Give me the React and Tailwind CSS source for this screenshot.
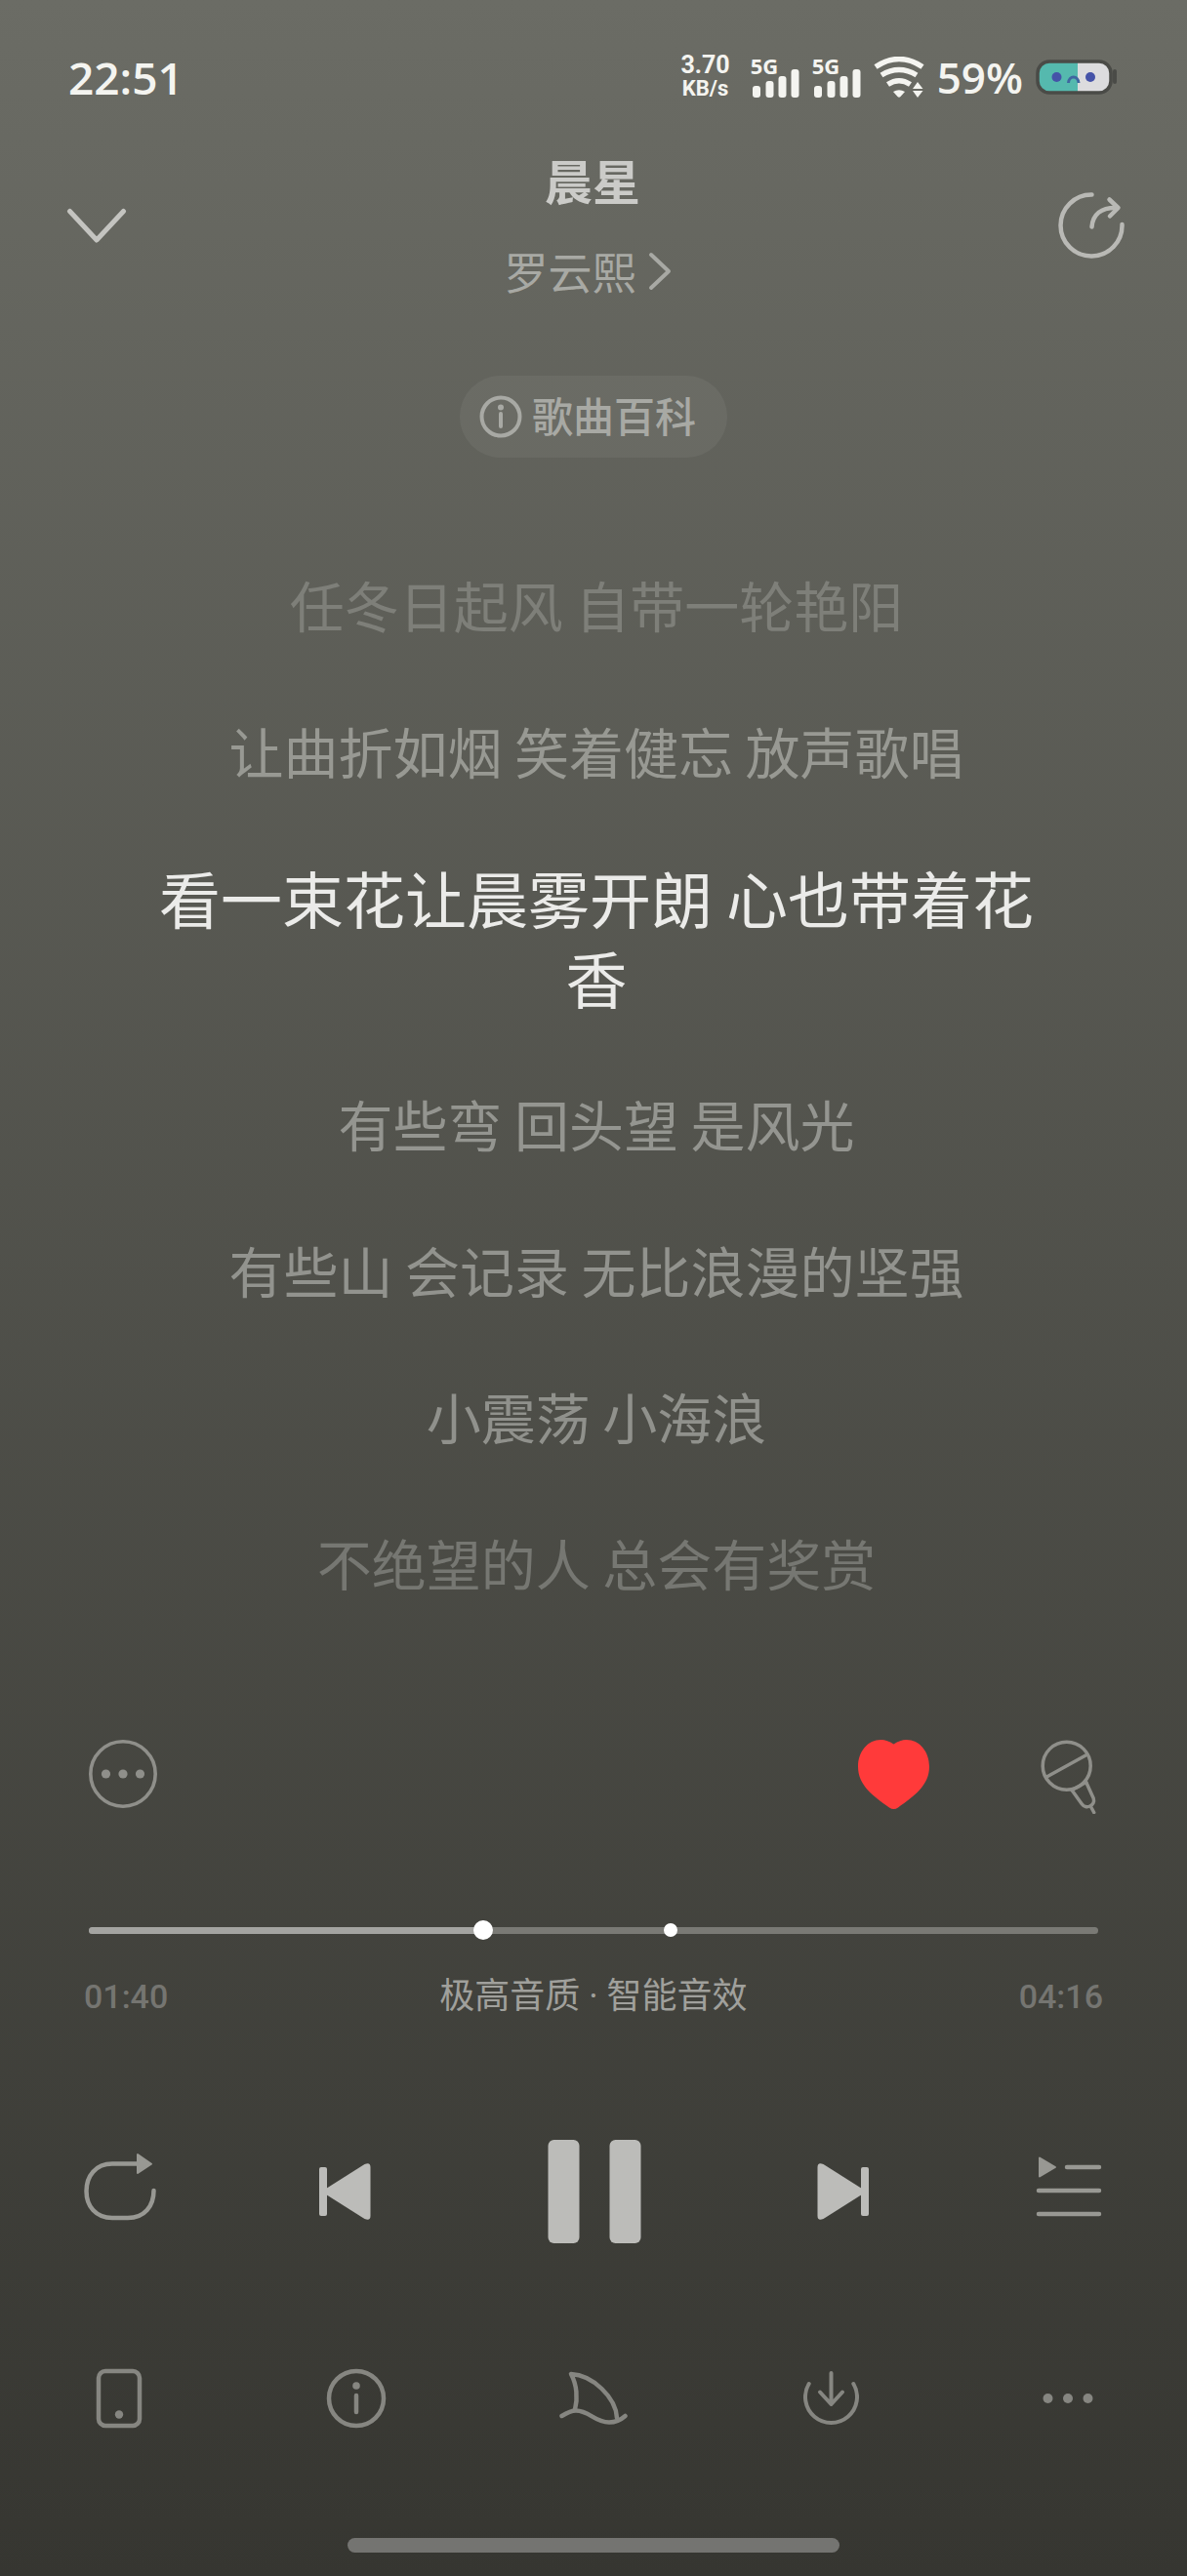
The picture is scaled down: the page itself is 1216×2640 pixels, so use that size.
import React, { useState } from "react";

const lyrics = [
  { text: "任冬日起风 自带一轮艳阳", color: "text-[#7e7f79]" },
  { text: "让曲折如烟 笑着健忘 放声歌唱", color: "text-[#989993]" },
  { text: "看一束花让晨雾开朗 心也带着花香", active: true, color: "text-[#ebebe9]" },
  { text: "有些弯 回头望 是风光", color: "text-[#949590]" },
  { text: "有些山 会记录 无比浪漫的坚强", color: "text-[#92938e]" },
  { text: "小震荡 小海浪", color: "text-[#90918c]" },
  { text: "不绝望的人 总会有奖赏", color: "text-[#767772]" },
];

const formatTime = (s) =>
  `${String(Math.floor(s / 60)).padStart(2, "0")}:${String(s % 60).padStart(2, "0")}`;

function Signal() {
  return (
    <div className="relative h-[42px] w-[50px]">
      <span className="absolute left-0 top-0 text-[22px] font-bold leading-[18px]">5G</span>
      <svg className="h-full w-full" viewBox="0 0 50 42" fill="currentColor">
        <rect x="2" y="30" width="8" height="12" rx="3" />
        <rect x="15.500" y="25" width="8" height="17" rx="3" />
        <rect x="28.500" y="20" width="8" height="22" rx="3" />
        <rect x="41.500" y="13" width="8" height="29" rx="3" />
      </svg>
    </div>
  );
}

function StatusBar() {
  return (
    <div className="flex h-[50px] items-center pl-[70px] pr-[71px] font-['Open_Sans',sans-serif] text-[#f4f4f0]">
      <span className="text-[46px] font-semibold leading-[50px]">22:51</span>
      <div className="ml-auto flex items-center gap-[13px]">
        <div className="mr-2 flex flex-col items-center font-[Roboto,sans-serif] font-bold">
          <span className="text-[25px] leading-6">3.70</span>
          <span className="text-[22px] leading-6">KB/s</span>
        </div>
        <Signal />
        <Signal />
        <svg className="h-[42px] w-[52px]" viewBox="0 0 52 42" fill="none" stroke="currentColor" strokeWidth="5.500">
          <path d="M2 10.500Q26 -5.500 50 10.500" />
          <path d="M8 19Q26 8 44 19" />
          <path d="M14.500 28.500Q26 21 37.500 28.500" />
          <path d="M20 36Q26 32.500 32 36L27.500 41Q26 42.500 24.500 41Z" fill="currentColor" stroke="none" />
          <path d="M40 33L45 26L50.500 33ZM40 35H50.500L45 42Z" fill="currentColor" stroke="none" />
        </svg>
        <span className="text-[44px] font-semibold leading-[50px]">59%</span>
        <svg className="h-9 w-[84px]" viewBox="0 0 84 36">
          <rect x="2" y="2" width="75" height="32" rx="12" fill="#dcdcde" />
          <path d="M43 2H14A12 12 0 0 0 2 14V22A12 12 0 0 0 14 34H43Z" fill="#55b9ae" />
          <rect x="2" y="2" width="75" height="32" rx="12" fill="none" stroke="#4a4b47" strokeWidth="3.500" />
          <circle cx="21.500" cy="18" r="5" fill="#4553a8" />
          <circle cx="56" cy="18" r="5" fill="#4553a8" />
          <path d="M33.500 24C34 16 43.500 16 44 24" fill="none" stroke="#3f66a0" strokeWidth="3" />
          <rect x="79" y="10" width="4" height="15" rx="2" fill="#4a4b47" />
        </svg>
      </div>
    </div>
  );
}

function Header() {
  return (
    <header className="mt-[50px] flex items-center justify-between pl-[68px] pr-16">
      <button aria-label="收起" className="text-[#c4c4c0]">
        <svg className="h-9 w-[62px]" viewBox="0 0 62 36" fill="none" stroke="currentColor" strokeWidth="5" strokeLinecap="round" strokeLinejoin="round">
          <path d="M3.500 3.500L31 33L58.500 3.500" />
        </svg>
      </button>
      <div className="flex flex-col items-center gap-[34px]">
        <h1 className="text-[49px] font-bold leading-[60px] text-[#cbcbc8]">晨星</h1>
        <a href="#artist" className="flex items-center gap-3 pr-2.5 text-[45px] leading-[60px] text-[#a8a9a4]">
          罗云熙
          <svg className="h-10 w-6" viewBox="0 0 24 40" fill="none" stroke="currentColor" strokeWidth="4" strokeLinecap="round" strokeLinejoin="round">
            <path d="M3 3L21 20L3 37" />
          </svg>
        </a>
      </div>
      <button aria-label="分享" className="text-[#b9b9b5]">
        <svg className="h-[68px] w-[68px]" viewBox="0 0 68 68" fill="none" stroke="currentColor" strokeWidth="4.500" strokeLinecap="round" strokeLinejoin="round">
          <path d="M34.500 2.500A31.500 31.500 0 1 0 65.500 33" />
          <path d="M34.500 35.500C35.500 23 44 15.500 60 16" />
          <path d="M52.500 7.500L61.500 16L53 24.500" />
        </svg>
      </button>
    </header>
  );
}

function ProgressBar({ value, max, onChange }) {
  return (
    <div className="relative mx-[91px] mt-[109px] flex h-5 items-center">
      <div className="h-[7px] w-full overflow-hidden rounded-full bg-[#7a7a75]">
        <div className="h-full bg-[#a4a4a1]" style={{ width: `${(value / max) * 100}%` }}></div>
      </div>
      {/* chorus marker */}
      <div className="absolute left-[57%] h-3.5 w-3.5 rounded-full bg-white"></div>
      <div
        className="absolute h-5 w-5 -translate-x-1/2 rounded-full bg-white"
        style={{ left: `${(value / max) * 100}%` }}
      ></div>
      <input
        type="range"
        aria-label="播放进度"
        min="0"
        max={max}
        value={value}
        onChange={(e) => onChange(Number(e.target.value))}
        className="absolute inset-0 h-full w-full cursor-pointer opacity-0"
      />
    </div>
  );
}

export default function App() {
  const [time, setTime] = useState(100);
  const [playing, setPlaying] = useState(true);
  const [liked, setLiked] = useState(true);
  const duration = 256;

  return (
    <div className="flex min-h-screen flex-col bg-linear-to-b from-[#6b6c65] to-[#363631] pb-6 pt-[54px] font-['Noto_Sans_CJK_SC',sans-serif]">
      <StatusBar />
      <Header />

      <a
        href="#wiki"
        className="mt-[77px] flex h-[84px] items-center gap-2.5 self-center rounded-full bg-white/5 pl-5 pr-8 text-[42px] font-medium leading-[60px] text-[#a8a9a4]"
      >
        <svg className="h-11 w-11" viewBox="0 0 44 44" fill="none" stroke="currentColor" strokeWidth="4">
          <circle cx="22" cy="22" r="19.500" />
          <path d="M22 19V32" strokeLinecap="round" />
          <circle cx="22" cy="12.500" r="3" fill="currentColor" stroke="none" />
        </svg>
        <span className="pb-1">歌曲百科</span>
      </a>

      {/* Lyrics */}
      <div className="mt-[109px] flex flex-col gap-[68px] pl-[147px] pr-[141px] text-center">
        {lyrics.map((line) => (
          <p
            key={line.text}
            className={`leading-[82px] ${line.active ? "text-[63px]" : "text-[56px]"} ${line.color}`}
          >
            {line.text}
          </p>
        ))}
      </div>

      {/* Song actions */}
      <div className="mt-[141px] flex items-start pl-[91px] pr-[92px] text-[#8f8f8a]">
        <button aria-label="更多操作">
          <svg className="h-[70px] w-[70px]" viewBox="0 0 70 70" fill="currentColor">
            <circle cx="35" cy="35" r="33.200" fill="none" stroke="currentColor" strokeWidth="3.600" />
            <circle cx="17.500" cy="35" r="4.600" />
            <circle cx="35" cy="35" r="4.600" />
            <circle cx="52.500" cy="35" r="4.600" />
          </svg>
        </button>
        <button
          aria-label="喜欢"
          onClick={() => setLiked(!liked)}
          className={`ml-auto mr-[114px] ${liked ? "text-[#ff3a3a]" : "text-[#8f8f8a]"}`}
        >
          <svg className="h-[71px] w-[73px]" viewBox="0 0 73 71" fill="currentColor">
            <path d="M36.500 4.500C32 1.500 28 0 23.500 0C10 0 0 12 0 27.500C0 47 16 58 32 69.500C35 71.500 38 71.500 41 69.500C57 58 73 47 73 27.500C73 12 63 0 49.500 0C45 0 41 1.500 36.500 4.500Z" />
          </svg>
        </button>
        <button aria-label="唱歌">
          <svg className="h-[76px] w-[58px]" viewBox="1 2 58 76" fill="none" stroke="currentColor" strokeWidth="3.500" strokeLinecap="round" strokeLinejoin="round">
            <circle cx="27.700" cy="28.700" r="24.500" />
            <path d="M7.300 40L49 17" />
            <path d="M33 53.500L43 67.500C47.500 74 57.500 69.500 55.200 62L47.700 45.500" />
            <path d="M33 53.500L47.700 45.500" />
            <path d="M53 71.500L55.700 76.500" />
          </svg>
        </button>
      </div>

      <ProgressBar value={time} max={duration} onChange={setTime} />

      <div className="mt-[36px] flex items-center justify-between px-[86px] font-[Roboto,'Noto_Sans_CJK_SC',sans-serif] leading-[44px]">
        <span className="text-[34px] font-medium text-[#757571]">{formatTime(time)}</span>
        <button className="text-4xl leading-[44px] text-[#a0a09c]">极高音质 · 智能音效</button>
        <span className="text-[34px] font-medium text-[#757571]">{formatTime(duration)}</span>
      </div>

      {/* Playback controls */}
      <div className="mt-[125px] flex h-[106px] items-center justify-between px-[86px] text-[#bcbcb9]">
        <button aria-label="循环播放" className="text-[#989893]">
          <svg className="h-[74px] w-[74px] overflow-visible" viewBox="0 0 74 74" fill="none" stroke="currentColor" strokeWidth="4.500" strokeLinecap="round">
            <path d="M54 8.500H29C12 8.500 2.500 21 2.500 36.500S12 64 29 64H45C62 64 71.500 52 71.500 36" />
            <path d="M55 -1V18L69 8.700Z" fill="currentColor" strokeWidth="2" strokeLinejoin="round" />
          </svg>
        </button>
        <button aria-label="上一首">
          <svg className="h-[58px] w-14" viewBox="0 0 56 58" fill="currentColor">
            <rect x="2" y="4" width="8" height="50" rx="2" />
            <path d="M9 26L48.500 1Q54.500 -1.500 54.500 4V54Q54.500 59.500 48.500 57L9 32Z" />
          </svg>
        </button>
        <button aria-label="播放暂停" onClick={() => setPlaying(!playing)}>
          <svg className="h-[106px] w-[126px]" viewBox="0 0 126 106" fill="currentColor">
            {playing ? (
              <>
                <rect x="16.500" width="32" height="106" rx="6" />
                <rect x="79.500" width="32" height="106" rx="6" />
              </>
            ) : (
              <path d="M28 6L108 53L28 100Z" />
            )}
          </svg>
        </button>
        <button aria-label="下一首">
          <svg className="h-[58px] w-14" viewBox="0 0 56 58" fill="currentColor">
            <path d="M47 26L7.500 1Q1.500 -1.500 1.500 4V54Q1.500 59.500 7.500 57L47 32Z" />
            <rect x="46" y="4" width="8" height="50" rx="2" />
          </svg>
        </button>
        <button aria-label="播放列表" className="text-[#989893]">
          <svg className="h-[74px] w-[74px]" viewBox="0 0 74 74" fill="none" stroke="currentColor" strokeWidth="4.500" strokeLinecap="round">
            <path d="M9 2.500V21.500L25 12Z" fill="currentColor" strokeWidth="2" strokeLinejoin="round" />
            <path d="M37 12H70M8 36H70M8 60H70" />
          </svg>
        </button>
      </div>

      {/* Bottom tools */}
      <div className="mt-32 grid h-[62px] grid-cols-5 place-items-center text-[#868681]">
        <button aria-label="设备">
          <svg className="h-[62px] w-12" viewBox="0 0 48 62" fill="none" stroke="currentColor" strokeWidth="4.500">
            <rect x="3" y="3" width="42" height="56" rx="7" />
            <circle cx="24" cy="47.500" r="4.200" fill="currentColor" stroke="none" />
          </svg>
        </button>
        <button aria-label="歌曲信息">
          <svg className="h-[62px] w-[62px]" viewBox="0 0 62 62" fill="none" stroke="currentColor" strokeWidth="4.500">
            <circle cx="31" cy="31" r="28" />
            <path d="M31 28V45" strokeLinecap="round" />
            <circle cx="31" cy="18" r="3.800" fill="currentColor" stroke="none" />
          </svg>
        </button>
        <button aria-label="鲸云音效">
          <svg className="h-14 w-[70px]" viewBox="0 0 70 56" fill="none" stroke="currentColor" strokeWidth="4.500" strokeLinecap="round" strokeLinejoin="round">
            <path d="M16 39.500C19 28 18 14 12 3C34 4 58 27 59 48" />
            <path d="M2.500 46C9 42 12 40.500 17 40.500C31 40.500 36 52.500 51 52.500C57 52.500 63 50 67.500 46" />
          </svg>
        </button>
        <button aria-label="下载">
          <svg className="h-14 w-[57px]" viewBox="0 0 57 56" fill="none" stroke="currentColor" strokeWidth="4" strokeLinecap="round" strokeLinejoin="round">
            <path d="M5.700 13A26.500 26.500 0 1 0 51.300 13" />
            <path d="M28.500 2V34M17 21.500L28.500 34L40 21.500" />
          </svg>
        </button>
        <button aria-label="更多">
          <svg className="h-3 w-[52px]" viewBox="0 0 52 12" fill="currentColor">
            <circle cx="5.500" cy="6" r="5" />
            <circle cx="26" cy="6" r="5" />
            <circle cx="46.500" cy="6" r="5" />
          </svg>
        </button>
      </div>

      <div className="mt-28 h-[15px] w-[504px] self-center rounded-full bg-[#747471]"></div>
    </div>
  );
}
